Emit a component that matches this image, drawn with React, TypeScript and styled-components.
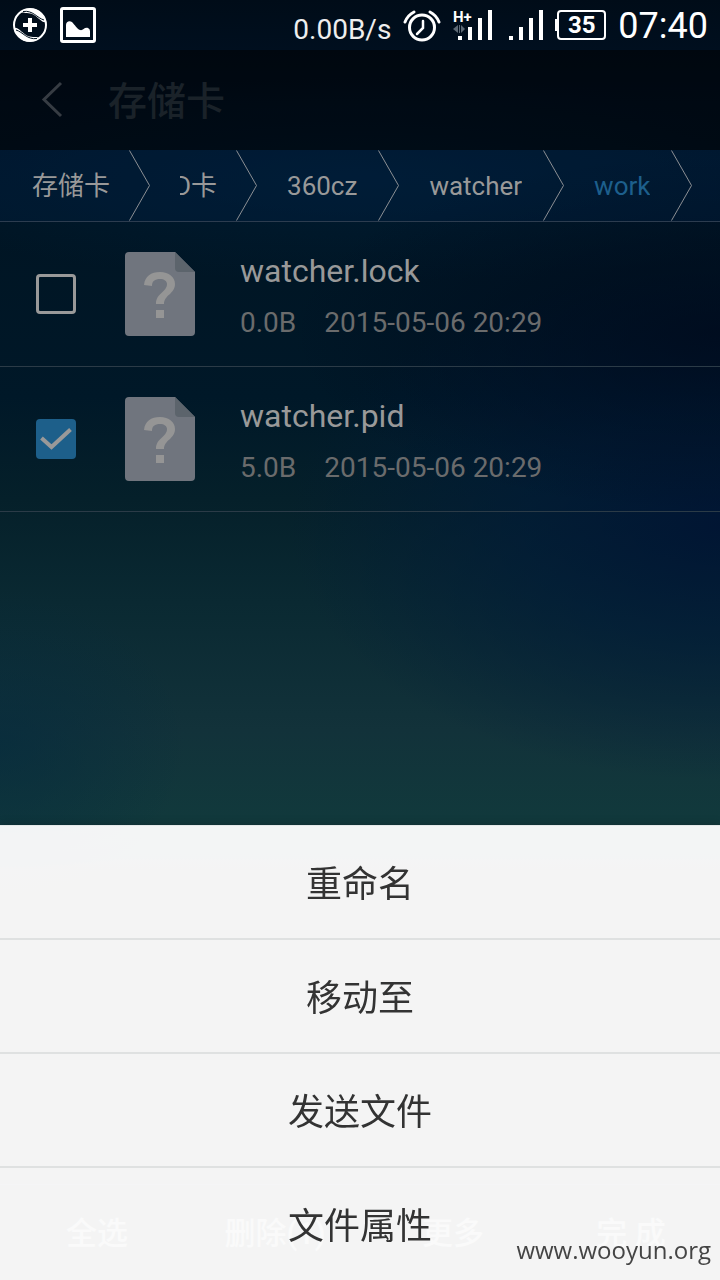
import React from 'react';
import styled, { createGlobalStyle } from 'styled-components';

const GlobalStyle = createGlobalStyle`
  *, *::before, *::after { box-sizing: border-box; }
  html, body { margin: 0; padding: 0; background: #00131f; }
  body, button, input { font-family: Roboto, "Noto Sans CJK SC", sans-serif; }
  button { border: 0; padding: 0; margin: 0; background: none; cursor: pointer; }
`;

const Screen = styled.div`
  display: flex;
  flex-direction: column;
  min-height: 100vh;
  background:
    radial-gradient(ellipse 60% 14% at 100% 26%, rgba(0, 8, 26, 0.7), transparent 100%),
    radial-gradient(ellipse 60% 20% at 100% 41%, rgba(0, 20, 52, 0.9) 0%, rgba(0, 26, 56, 0.65) 45%, transparent 100%),
    radial-gradient(ellipse 26% 12% at 0% 58%, rgba(4, 42, 62, 0.6), transparent 100%),
    radial-gradient(ellipse 70% 8% at 50% 14%, rgba(0, 34, 62, 0.5), transparent 100%),
    linear-gradient(180deg, #000c18 0%, #001226 8%, #001524 18%, #001828 31%, #05202a 39%, #0a2932 47%, #12323a 57%, #11393c 64%, #2a3636 68%, #263636 100%);
`;

const StatusBar = styled.div`
  display: flex;
  align-items: center;
  justify-content: space-between;
  height: 50px;
  padding: 0 12px;
  color: #fff;
`;

const StatusGroup = styled.div`
  display: flex;
  align-items: center;
  gap: 12px;
  svg { display: block; flex: none; overflow: visible; }
`;

const Speed = styled.span`
  font-size: 28px;
  line-height: 36px;
  padding-top: 10px;
  color: #eee;
`;

const Signals = styled.div`
  display: flex;
  gap: 16px;
`;

const Battery = styled.div`
  display: flex;
  align-items: center;
  &::before {
    content: '';
    width: 2px;
    height: 12px;
    background: #fff;
  }
`;

const BatteryLevel = styled.span`
  width: 49px;
  height: 30px;
  border: 2px solid #fff;
  border-radius: 4px;
  font-size: 24px;
  font-weight: 700;
  line-height: 27px;
  text-align: center;
`;

const Clock = styled.time`
  font-size: 36px;
  line-height: 50px;
  padding-top: 2px;
`;

const Header = styled.header`
  display: flex;
  align-items: center;
  gap: 44px;
  height: 100px;
  padding: 0 40px;
  background: rgba(0, 0, 0, 0.5);
`;

const BackButton = styled.button`
  width: 24px;
  height: 40px;
  color: #363c43;
  svg { display: block; }
`;

const Title = styled.h1`
  margin: 0;
  padding-top: 4px;
  font-size: 39px;
  font-weight: 500;
  line-height: 60px;
  color: #1a2229;
`;

const Crumbs = styled.nav`
  display: flex;
  height: 72px;
  padding-left: 2px;
  overflow: hidden;
  background: rgba(0, 32, 68, 0.3);
  border-bottom: 1px solid #2c3c4f;
`;

const Crumb = styled.a<{ $current?: boolean; $latin?: boolean }>`
  display: flex;
  align-items: center;
  flex: none;
  gap: ${(p) => (p.$latin ? '21px' : '19px')};
  padding-left: 30px;
  font-size: 26px;
  line-height: 40px;
  white-space: nowrap;
  text-decoration: none;
  color: ${(p) => (p.$current ? '#1d5f8c' : '#999')};
  svg { display: block; color: #8b8f94; }
`;

const CrumbText = styled.span<{ $clipped?: boolean }>`
  display: flex;
  justify-content: flex-end;
  overflow: hidden;
  width: ${(p) => (p.$clipped ? '37px' : 'auto')};
`;

const FileList = styled.ul`
  margin: 0;
  padding: 0;
  list-style: none;
`;

const FileRow = styled.li`
  border-bottom: 1px solid #2b3b47;
`;

const FileLabel = styled.label`
  display: flex;
  align-items: center;
  height: 144px;
  padding: 0 36px;
`;

const CheckWrap = styled.span`
  display: grid;
  flex: none;
  margin-right: 49px;
  > * { grid-area: 1 / 1; }
  svg { pointer-events: none; visibility: hidden; }
  input:checked + svg { visibility: visible; }
`;

const CheckInput = styled.input`
  appearance: none;
  width: 40px;
  height: 40px;
  margin: 0;
  border: 3px solid #999;
  border-radius: 4px;
  &:checked {
    border: 0;
    background: #1d5f8a;
  }
`;

const FileIcon = styled.svg`
  display: block;
  flex: none;
  margin-right: 45px;
`;

const FileInfo = styled.span`
  display: flex;
  flex-direction: column;
  gap: 12px;
  padding-top: 5px;
`;

const FileName = styled.span`
  font-size: 32px;
  line-height: 40px;
  color: #999;
`;

const FileMeta = styled.span`
  display: flex;
  gap: 28px;
  font-size: 28px;
  line-height: 40px;
  color: #6a6b6c;
`;

const Toolbar = styled.div`
  display: grid;
  grid-template-columns: repeat(4, 1fr);
  height: 96px;
  margin-top: auto;
  padding-left: 8px;
  border-top: 1px solid #445;
`;

const ToolButton = styled.button`
  padding-top: 2px;
  font-size: 31px;
  font-weight: 500;
  line-height: 40px;
  color: #999;
`;

const Sheet = styled.div`
  position: fixed;
  left: 0;
  right: 0;
  bottom: 0;
  display: flex;
  flex-direction: column;
  background: rgba(255, 255, 255, 0.95);
  border-top: 1px solid #e4e8e8;
  box-shadow: 0 -2px 8px rgba(0, 0, 0, 0.15);
`;

const SheetItem = styled.button`
  height: 114px;
  padding-top: 6px;
  border-bottom: 2px solid #dfe1e1;
  font-size: 36px;
  line-height: 52px;
  color: #333;
  &:last-child {
    height: 112px;
    border-bottom: 0;
  }
`;

const Watermark = styled.span`
  position: fixed;
  right: 9px;
  bottom: 12px;
  font-family: "Open Sans", sans-serif;
  font-size: 24px;
  line-height: 36px;
  color: #444;
`;

const PlusIcon = () => (
  <svg width="36" height="36" viewBox="0 0 36 36" fill="none">
    <circle cx="18" cy="18" r="16" stroke="#fff" strokeWidth="2" />
    <path d="M8 5C14 1 21 0 27 4C31 7 33 10 34 15C30 16 27 11 22 8C17 5 13 7 8 5Z" fill="#fff" />
    <path d="M11 4.500C21 3 25 11 32 13" stroke="#00101e" strokeWidth="1" />
    <path d="M28 31C22 35 15 36 9 32C5 29 3 26 2 21C6 20 9 25 14 28C19 31 23 29 28 31Z" fill="#fff" />
    <path d="M25 31.500C15 33 11 25 4 23" stroke="#00101e" strokeWidth="1" />
    <path d="M18 11v14M11 18h14" stroke="#fff" strokeWidth="4" />
  </svg>
);

const PictureIcon = () => (
  <svg width="36" height="36" viewBox="0 0 36 36" fill="none">
    <rect x="1.5" y="1.5" width="33" height="33" rx="1.5" stroke="#fff" strokeWidth="3" />
    <path d="M6 30V18C6 15 9 13 12 15C15 18 17 22 20 23C23 24 24 20 28 21Q30 22 30 24V30Z" fill="#fff" />
  </svg>
);

const AlarmIcon = () => (
  <svg width="38" height="34" viewBox="0 0 38 34" fill="none" stroke="#fff" strokeWidth="3" strokeLinecap="round">
    <circle cx="19" cy="19.500" r="12.5" />
    <path d="M2 14C4 9 7 6 11 4M36 14C34 9 31 6 27 4" />
    <path d="M20 13v7l-6 6" strokeWidth="2.5" />
  </svg>
);

const Bars = () => (
  <g fill="#fff">
    <rect x="0" y="26" width="4" height="4" />
    <rect x="10" y="17" width="4" height="13" />
    <rect x="20" y="8" width="4" height="22" />
    <rect x="30" y="0" width="4" height="30" />
  </g>
);

const DataSignalIcon = () => (
  <svg width="40" height="30" viewBox="0 0 40 30">
    <g transform="translate(5 0)"><Bars /></g>
    <text x="0" y="12" fontSize="15" fontWeight="700" fill="#fff">H+</text>
    <path d="M0 19l5-4v8zM6 15h1v8h-1zM12 19l-4-4v8z" fill="#5d6975" />
  </svg>
);

const SignalIcon = () => (
  <svg width="34" height="30" viewBox="0 0 34 30"><Bars /></svg>
);

const CrumbArrow = () => (
  <svg width="21" height="71" viewBox="0 0 21 71" fill="none" stroke="currentColor">
    <path d="M0.5 0.5L20.5 35.5L0.5 70.5" />
  </svg>
);

const UnknownFileIcon = () => (
  <FileIcon width="70" height="84" viewBox="0 0 70 84" fill="none">
    <path d="M4 0H50L70 20V80a4 4 0 0 1-4 4H4a4 4 0 0 1-4-4V4a4 4 0 0 1 4-4Z" fill="#70757e" />
    <path d="M50 0L70 20H54a4 4 0 0 1-4-4Z" fill="#5c646c" />
    <path d="M19 33C20 24 26 20 35 20C44 20 50 25 50 32C50 42 39 43 39 52H31C31 41 42 40 42 32C42 29 39 27 35 27C30 27 27 29 27 34Z" fill="#959595" />
    <rect x="31" y="58" width="8" height="8" fill="#959595" />
  </FileIcon>
);

const crumbs = [
  { text: '存储卡' },
  { text: 'SD卡', clipped: true },
  { text: '360cz', latin: true },
  { text: 'watcher', latin: true },
  { text: 'work', latin: true, current: true },
];

const files = [
  { name: 'watcher.lock', size: '0.0B', date: '2015-05-06 20:29', checked: false },
  { name: 'watcher.pid', size: '5.0B', date: '2015-05-06 20:29', checked: true },
];

const tools = ['全选', '删除(1)', '更多', '完 成'];
const actions = ['重命名', '移动至', '发送文件', '文件属性'];

export default function App() {
  return (
    <>
      <GlobalStyle />
      <Screen>
        <StatusBar>
          <StatusGroup>
            <PlusIcon />
            <PictureIcon />
          </StatusGroup>
          <StatusGroup>
            <Speed>0.00B/s</Speed>
            <AlarmIcon />
            <Signals>
              <DataSignalIcon />
              <SignalIcon />
            </Signals>
            <Battery><BatteryLevel>35</BatteryLevel></Battery>
            <Clock>07:40</Clock>
          </StatusGroup>
        </StatusBar>
        <Header>
          <BackButton aria-label="返回">
            <svg width="24" height="40" viewBox="0 0 24 40" fill="none" stroke="currentColor" strokeWidth="3">
              <path d="M21 3L4 19.500L21 36" />
            </svg>
          </BackButton>
          <Title>存储卡</Title>
        </Header>
        <Crumbs>
          {crumbs.map((c) => (
            <Crumb key={c.text} href="#" $current={c.current} $latin={c.latin}>
              <CrumbText $clipped={c.clipped}>{c.text}</CrumbText>
              <CrumbArrow />
            </Crumb>
          ))}
        </Crumbs>
        <FileList>
          {files.map((f) => (
            <FileRow key={f.name}>
              <FileLabel>
                <CheckWrap>
                  <CheckInput type="checkbox" defaultChecked={f.checked} />
                  <svg width="40" height="40" viewBox="0 0 40 40" fill="none" stroke="#999" strokeWidth="4">
                    <path d="M5.500 19L15.500 28L34.500 10.500" />
                  </svg>
                </CheckWrap>
                <UnknownFileIcon />
                <FileInfo>
                  <FileName>{f.name}</FileName>
                  <FileMeta>
                    <span>{f.size}</span>
                    <span>{f.date}</span>
                  </FileMeta>
                </FileInfo>
              </FileLabel>
            </FileRow>
          ))}
        </FileList>
        <Toolbar>
          {tools.map((t) => <ToolButton key={t}>{t}</ToolButton>)}
        </Toolbar>
      </Screen>
      <Sheet>
        {actions.map((a) => <SheetItem key={a}>{a}</SheetItem>)}
      </Sheet>
      <Watermark>www.wooyun.org</Watermark>
    </>
  );
}
